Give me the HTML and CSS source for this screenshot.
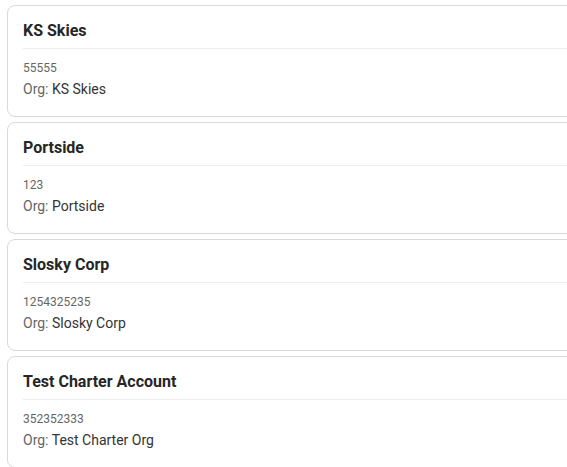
FILE: index.html
```html
<!DOCTYPE html>
<html>
<head>
<meta charset="utf-8">
<link rel="stylesheet" href="styles.css">
</head>
<body>
<div class="list">
  <div class="card">
    <div class="card-header"><h3 class="title">KS Skies</h3></div>
    <div class="card-body">
      <div class="code">55555</div>
      <div class="org"><span class="label">Org:</span> KS Skies</div>
    </div>
  </div>
  <div class="card">
    <div class="card-header"><h3 class="title">Portside</h3></div>
    <div class="card-body">
      <div class="code">123</div>
      <div class="org"><span class="label">Org:</span> Portside</div>
    </div>
  </div>
  <div class="card">
    <div class="card-header"><h3 class="title">Slosky Corp</h3></div>
    <div class="card-body">
      <div class="code">1254325235</div>
      <div class="org"><span class="label">Org:</span> Slosky Corp</div>
    </div>
  </div>
  <div class="card">
    <div class="card-header"><h3 class="title">Test Charter Account</h3></div>
    <div class="card-body">
      <div class="code">352352333</div>
      <div class="org"><span class="label">Org:</span> Test Charter Org</div>
    </div>
  </div>
</div>
</body>
</html>
```
FILE: styles.css
```css
html, body {
  margin: 0;
  padding: 0;
  overflow: hidden;
  background: #ffffff;
  font-family: Roboto, "Liberation Sans", sans-serif;
}
.list {
  display: flex;
  flex-direction: column;
  gap: 5px;
  padding: 5px 0 0 7px;
}
.card {
  width: 640px;
  box-sizing: border-box;
  border: 1px solid #d9d9d9;
  border-radius: 8px;
  padding: 13px 15px 16px 15px;
  background: #fff;
}
.card-header {
  border-bottom: 1px solid #ececec;
  padding-bottom: 5px;
}
.title {
  margin: 0;
  font-size: 16px;
  line-height: 24px;
  font-weight: 700;
  color: #262626;
}
.card-body {
  padding-top: 10px;
}
.code {
  font-size: 12px;
  line-height: 18px;
  margin-bottom: 2px;
  color: #666666;
}
.org {
  font-size: 14px;
  line-height: 21px;
  color: #333333;
}
.label {
  color: #666666;
}
```
